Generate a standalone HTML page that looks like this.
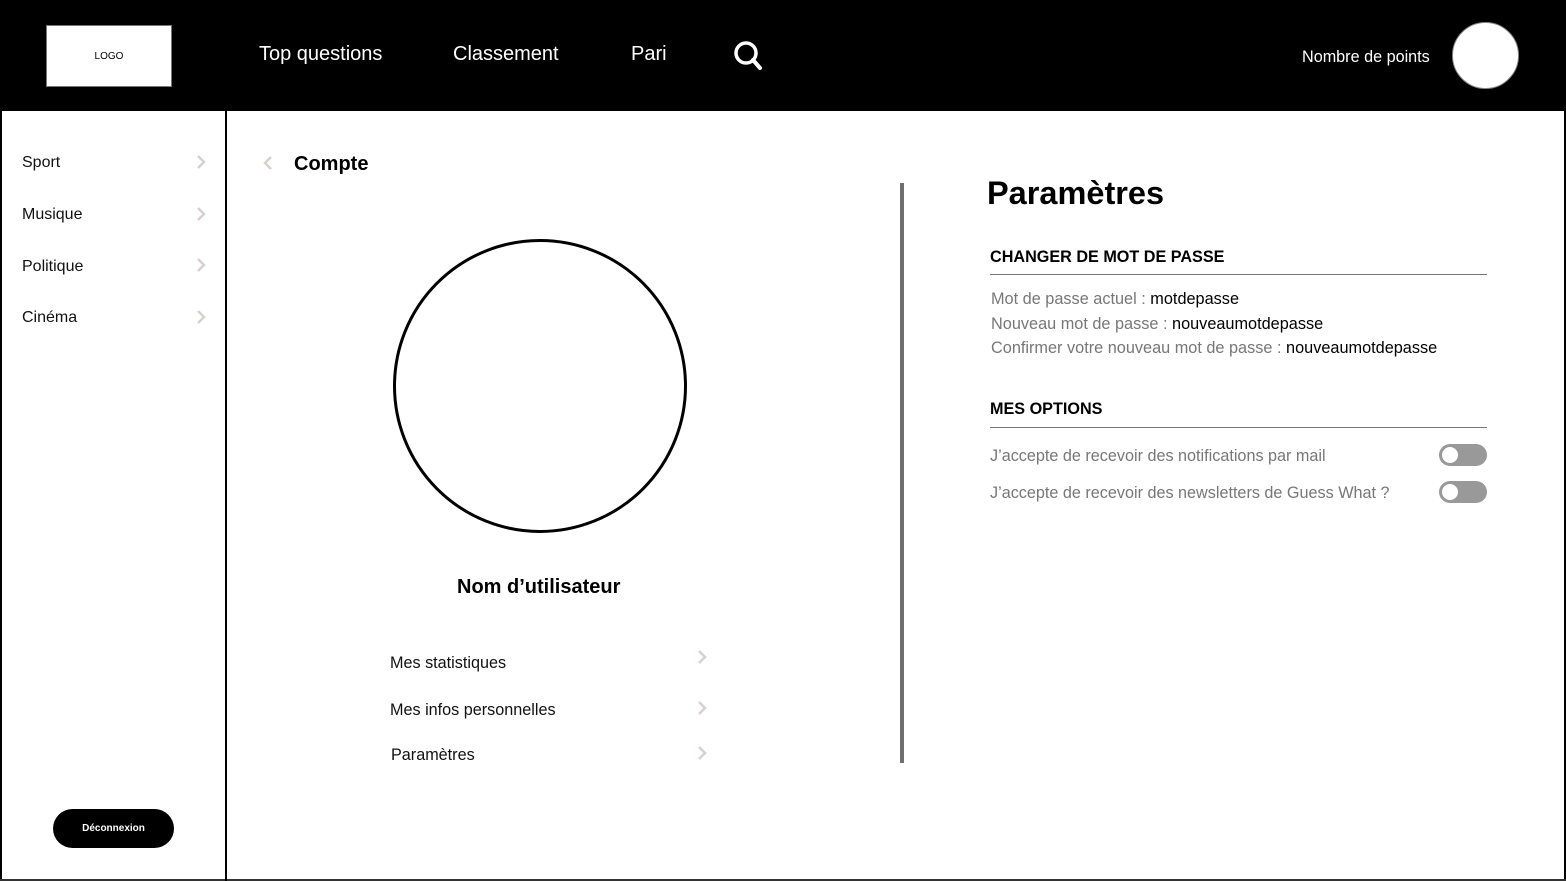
<!DOCTYPE html>
<html><head><meta charset="utf-8"><style>
*{margin:0;padding:0;box-sizing:border-box}
body{width:1566px;height:881px;position:relative;background:#fff;font-family:"Liberation Sans",Arial,sans-serif;overflow:hidden}
.a{position:absolute;white-space:nowrap}
.hdr{position:absolute;left:0;top:0;width:1566px;height:111px;background:#000}
.nav{color:#fff;font-size:20px;top:43px}
.side{font-size:16px;color:#111}
.chev{position:absolute;width:12px;height:16px}
.g{color:#777}
.tog{position:absolute;width:48px;height:22px;border-radius:11px;background:#999}
.tog:after{content:"";position:absolute;left:3px;top:3px;width:16px;height:16px;border-radius:50%;background:#fff}
</style></head><body>
<div class="hdr"></div>
<div class="a" style="left:46px;top:25px;width:126px;height:62px;background:#fff;border:1px solid #777;font-size:10px;text-align:center;line-height:62px;color:#000">LOGO</div>
<div class="a nav" style="left:259px">Top questions</div>
<div class="a nav" style="left:453px">Classement</div>
<div class="a nav" style="left:631px">Pari</div>
<svg class="a" style="left:733px;top:40px" width="30" height="30" viewBox="0 0 30 30"><circle cx="13" cy="13" r="10" fill="none" stroke="#fff" stroke-width="3.5"/><path d="M20 20l7 8" stroke="#fff" stroke-width="4" stroke-linecap="round"/></svg>
<div class="a" style="left:1302px;top:48px;color:#fff;font-size:16.2px">Nombre de points</div>
<div class="a" style="left:1452px;top:22px;width:67px;height:67px;border-radius:50%;background:#fff;border:1px solid #888"></div>
<div class="a" style="left:0;top:111px;width:2px;height:770px;background:#000"></div>
<div class="a" style="left:1564px;top:111px;width:2px;height:770px;background:#000"></div>
<div class="a" style="left:0;top:879px;width:1566px;height:2px;background:#333"></div>
<div class="a" style="left:225px;top:111px;width:2px;height:770px;background:#000"></div>
<div class="a side" style="left:22px;top:154px">Sport</div>
<div class="a side" style="left:22px;top:206px">Musique</div>
<div class="a side" style="left:22px;top:258px">Politique</div>
<div class="a side" style="left:22px;top:309px">Cinéma</div>
<svg class="chev" style="left:195px;top:154px" viewBox="0 0 12 16"><path d="M3 2l6 6-6 6" fill="none" stroke="#d8d0d0" stroke-width="2.5"/></svg>
<svg class="chev" style="left:195px;top:206px" viewBox="0 0 12 16"><path d="M3 2l6 6-6 6" fill="none" stroke="#d8d0d0" stroke-width="2.5"/></svg>
<svg class="chev" style="left:195px;top:257px" viewBox="0 0 12 16"><path d="M3 2l6 6-6 6" fill="none" stroke="#d8d0d0" stroke-width="2.5"/></svg>
<svg class="chev" style="left:195px;top:309px" viewBox="0 0 12 16"><path d="M3 2l6 6-6 6" fill="none" stroke="#d8d0d0" stroke-width="2.5"/></svg>
<div class="a" style="left:53px;top:809px;width:121px;height:39px;border-radius:20px;background:#000;color:#fff;font-size:10px;font-weight:bold;text-align:center;line-height:39px">Déconnexion</div>
<svg class="chev" style="left:262px;top:155px" viewBox="0 0 12 16"><path d="M9 2l-6 6 6 6" fill="none" stroke="#d8d0d0" stroke-width="2.5"/></svg>
<div class="a" style="left:294px;top:153px;font-size:20px;font-weight:bold">Compte</div>
<div class="a" style="left:393px;top:239px;width:294px;height:294px;border-radius:50%;border:3px solid #000"></div>
<div class="a" style="left:457px;top:576px;font-size:20px;font-weight:bold">Nom d’utilisateur</div>
<div class="a side" style="left:390px;top:654px;font-size:16.2px">Mes statistiques</div>
<div class="a side" style="left:390px;top:701px;font-size:16.2px">Mes infos personnelles</div>
<div class="a side" style="left:391px;top:746px;font-size:16.2px">Paramètres</div>
<svg class="chev" style="left:696px;top:649px" viewBox="0 0 12 16"><path d="M3 2l6 6-6 6" fill="none" stroke="#d8d0d0" stroke-width="2.5"/></svg>
<svg class="chev" style="left:696px;top:700px" viewBox="0 0 12 16"><path d="M3 2l6 6-6 6" fill="none" stroke="#d8d0d0" stroke-width="2.5"/></svg>
<svg class="chev" style="left:696px;top:745px" viewBox="0 0 12 16"><path d="M3 2l6 6-6 6" fill="none" stroke="#d8d0d0" stroke-width="2.5"/></svg>
<div class="a" style="left:900px;top:183px;width:4px;height:580px;background:#6f6f6f"></div>
<div class="a" style="left:987px;top:175px;font-size:32.5px;font-weight:bold">Paramètres</div>
<div class="a" style="left:990px;top:248px;font-size:16.2px;font-weight:bold">CHANGER DE MOT DE PASSE</div>
<div class="a" style="left:990px;top:274px;width:497px;height:1px;background:#777"></div>
<div class="a" style="left:991px;top:287px;font-size:16.3px;line-height:24.5px"><span class="g">Mot de passe actuel : </span>motdepasse<br><span class="g">Nouveau mot de passe : </span>nouveaumotdepasse<br><span class="g">Confirmer votre nouveau mot de passe : </span>nouveaumotdepasse</div>
<div class="a" style="left:990px;top:400px;font-size:16.2px;font-weight:bold">MES OPTIONS</div>
<div class="a" style="left:990px;top:427px;width:497px;height:1px;background:#777"></div>
<div class="a g" style="left:990px;top:447px;font-size:16.2px">J’accepte de recevoir des notifications par mail</div>
<div class="a g" style="left:990px;top:484px;font-size:16.2px">J’accepte de recevoir des newsletters de Guess What ?</div>
<div class="tog" style="left:1439px;top:444px"></div>
<div class="tog" style="left:1439px;top:481px"></div>
</body></html>
